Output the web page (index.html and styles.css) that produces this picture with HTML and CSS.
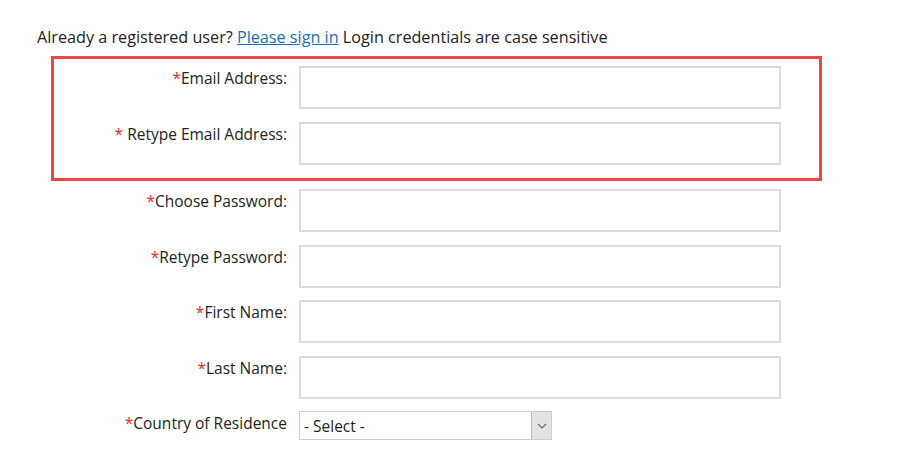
FILE: index.html
```html
<!DOCTYPE html>
<html lang="en">
<head>
<meta charset="utf-8">
<title>Register</title>
<link rel="stylesheet" href="styles.css">
</head>
<body>
<div class="page">
  <p class="intro">Already a registered user? <a href="#" class="link">Please sign in</a> Login credentials are case sensitive</p>
  <div class="form">
    <div class="highlight">
      <div class="row">
        <label class="label"><span class="req">*</span>Email Address:</label>
        <input class="field" type="text">
      </div>
      <div class="row">
        <label class="label"><span class="req">*</span> Retype Email Address:</label>
        <input class="field" type="text">
      </div>
    </div>
    <div class="plain">
      <div class="row">
        <label class="label"><span class="req">*</span>Choose Password:</label>
        <input class="field" type="password">
      </div>
      <div class="row">
        <label class="label"><span class="req">*</span>Retype Password:</label>
        <input class="field" type="password">
      </div>
      <div class="row">
        <label class="label"><span class="req">*</span>First Name:</label>
        <input class="field" type="text">
      </div>
      <div class="row">
        <label class="label"><span class="req">*</span>Last Name:</label>
        <input class="field" type="text">
      </div>
      <div class="row row-select">
        <label class="label"><span class="req">*</span>Country of Residence</label>
        <div class="select">
          <span class="select-text">- Select -</span>
          <span class="select-btn">
            <svg width="10" height="6" viewBox="0 0 10 6"><path d="M1 1 L5 5 L9 1" fill="none" stroke="#666" stroke-width="1.2"/></svg>
          </span>
        </div>
      </div>
    </div>
  </div>
</div>
</body>
</html>
```
FILE: styles.css
```css
html, body {
  margin: 0;
  padding: 0;
  background: #fff;
}
body {
  font-family: "Open Sans", "Liberation Sans", sans-serif;
  font-size: 15.5px;
  color: #222;
}
.page {
  padding-top: 26px;
}
.intro {
  margin: 0 0 8px 37px;
  font-size: 16.2px;
  line-height: 22px;
  color: #222;
}
.link {
  color: #1a6eb5;
  text-decoration: underline;
}
.form {
  margin-left: 51px;
  width: 771px;
}
.highlight {
  border: 3px solid #f24444;
  padding: 7px 0 13px 0;
  display: flex;
  flex-direction: column;
  gap: 12.5px;
}
.plain {
  padding: 8.5px 0 0 3px;
  display: flex;
  flex-direction: column;
  gap: 12.5px;
}
.row {
  display: flex;
  align-items: flex-start;
  gap: 12px;
}
.label {
  width: 233px;
  flex: none;
  text-align: right;
  line-height: 22px;
  padding-top: 1px;
  color: #222;
}
.req {
  color: #ee2a2a;
}
.field {
  flex: none;
  box-sizing: border-box;
  width: 482px;
  height: 43px;
  margin: 0;
  border: 2px solid #dcdcdc;
  background: #fff;
  outline: none;
}
.select {
  flex: none;
  box-sizing: border-box;
  width: 253px;
  height: 29px;
  border: 1px solid #cfcfcf;
  display: flex;
  align-items: stretch;
  background: #fff;
}
.select-text {
  flex: 1;
  padding-left: 4px;
  line-height: 28px;
  color: #222;
}
.select-btn {
  width: 19px;
  background: #e3e3e3;
  border-left: 1px solid #b8b8b8;
  display: flex;
  align-items: center;
  justify-content: center;
}
```
